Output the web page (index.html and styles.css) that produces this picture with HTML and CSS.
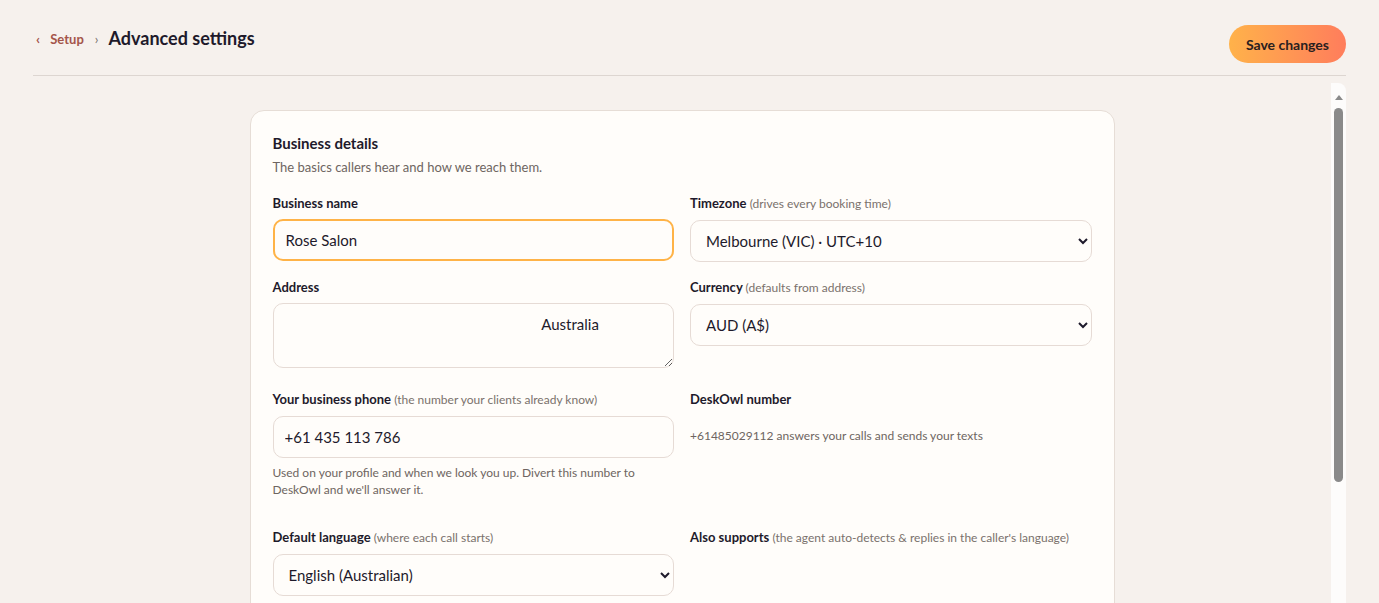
FILE: index.html
```html
<!DOCTYPE html>
<html lang="en">
<head>
    <meta charset="UTF-8">
    <meta name="viewport" content="width=device-width, initial-scale=1.0">
    <title>Advanced settings</title>
    <link rel="stylesheet" href="styles.css">
</head>
<body>
    <header class="top-bar">
        <nav class="crumbs">
            <a href="#" class="crumb-back"><span class="chev">&lsaquo;</span> Setup</a>
            <span class="crumb-sep">&rsaquo;</span>
            <h1>Advanced settings</h1>
        </nav>
        <button class="save-btn">Save changes</button>
    </header>

    <div class="body-area">
        <main class="scroller">
            <section class="card">
                <h2>Business details</h2>
                <p class="card-sub">The basics callers hear and how we reach them.</p>

                <div class="field-grid">
                    <div class="field">
                        <label for="bizName">Business name</label>
                        <input type="text" id="bizName" class="control focused" value="Rose Salon">
                    </div>
                    <div class="field">
                        <label for="tz">Timezone <span class="hint">(drives every booking time)</span></label>
                        <select id="tz" class="control">
                            <option>Melbourne (VIC) · UTC+10</option>
                        </select>
                    </div>

                    <div class="field">
                        <label for="address">Address</label>
                        <textarea id="address" class="control area" rows="2">                                                                   Australia</textarea>
                    </div>
                    <div class="field">
                        <label for="currency">Currency <span class="hint">(defaults from address)</span></label>
                        <select id="currency" class="control">
                            <option>AUD (A$)</option>
                        </select>
                    </div>

                    <div class="field">
                        <label for="phone">Your business phone <span class="hint">(the number your clients already know)</span></label>
                        <input type="text" id="phone" class="control" value="+61 435 113 786">
                        <p class="help">Used on your profile and when we look you up. Divert this number to DeskOwl and we'll answer it.</p>
                    </div>
                    <div class="field">
                        <label>DeskOwl number</label>
                        <div class="static-value">+61485029112 answers your calls and sends your texts</div>
                    </div>

                    <div class="field">
                        <label for="lang">Default language <span class="hint">(where each call starts)</span></label>
                        <select id="lang" class="control">
                            <option>English (Australian)</option>
                        </select>
                    </div>
                    <div class="field">
                        <label>Also supports <span class="hint">(the agent auto-detects &amp; replies in the caller's language)</span></label>
                    </div>
                </div>
            </section>
        </main>

        <!-- scrollbar rail (headless hides native scrollbars) -->
        <div class="rail">
            <span class="rail-arrow"></span>
            <span class="rail-thumb"></span>
        </div>
    </div>
</body>
</html>
```

FILE: styles.css
```css
/* Page shell */
html, body {
    height: 100%;
}

body {
    margin: 0;
    padding: 0 33px;
    box-sizing: border-box;
    display: flex;
    flex-direction: column;
    font-family: Lato, "Open Sans", Arial, sans-serif;
    background-color: #f6f1ed;
    color: #1e1a2b;
    overflow: hidden;
}

/* Header */
.top-bar {
    display: flex;
    justify-content: space-between;
    align-items: flex-start;
    padding: 25px 0 12px;
    border-bottom: 1px solid #ddd6d1;
    flex-shrink: 0;
}

.crumbs {
    display: flex;
    align-items: center;
    height: 26px;
    padding-left: 3px;
}

.crumb-back {
    color: #a4554a;
    text-decoration: none;
    font-size: 13px;
    font-weight: 700;
}

.crumb-back .chev {
    margin-right: 7px;
    font-size: 14px;
}

.crumb-sep {
    color: #7a716c;
    font-size: 13px;
    margin: 1px 10px 0 11px;
}

.crumbs h1 {
    margin: 0;
    font-size: 18px;
    font-weight: 700;
    color: #1e1a2b;
}

.save-btn {
    height: 38px;
    padding: 0 17px;
    border: none;
    border-radius: 19px;
    background: linear-gradient(90deg, #ffb24a, #ff7d5c);
    color: #2a2020;
    font-family: inherit;
    font-size: 14px;
    font-weight: 700;
    cursor: pointer;
}

/* Scrolling body */
.body-area {
    flex: 1;
    min-height: 0;
    display: flex;
    margin-top: 7px;
}

.scroller {
    flex: 1;
    padding: 27px 0 40px;
    overflow: hidden;
}

.rail {
    width: 15px;
    flex-shrink: 0;
    display: flex;
    flex-direction: column;
    align-items: center;
    background-color: #fdfcfb;
    border-radius: 0 8px 0 0;
}

.rail-arrow {
    margin-top: 12px;
    width: 0;
    height: 0;
    border-left: 4.5px solid transparent;
    border-right: 4.5px solid transparent;
    border-bottom: 5px solid #8a8a8a;
}

.rail-thumb {
    margin-top: 8px;
    width: 9px;
    height: 374px;
    background-color: #8a8a8a;
    border-radius: 5px;
}

/* Card */
.card {
    width: 819px;
    margin: 0 auto;
    padding: 22px 22px 120px;
    background-color: #fffdfa;
    border: 1px solid #e6ddd6;
    border-radius: 14px;
}

.card h2 {
    margin: 0;
    font-size: 15px;
    font-weight: 700;
    line-height: 20px;
}

.card-sub {
    margin: 6px 0 19px;
    font-size: 13px;
    color: #6e6561;
}

.field-grid {
    display: grid;
    grid-template-columns: 1fr 1fr;
    column-gap: 16px;
    row-gap: 16px;
}

.field label {
    display: block;
    margin-bottom: 7px;
    font-size: 13px;
    font-weight: 700;
    line-height: 18px;
    color: #1e1a2b;
}

.hint {
    font-size: 12px;
    font-weight: 400;
    color: #7a716c;
}

/* Inputs */
.control {
    display: block;
    width: 100%;
    height: 42px;
    box-sizing: border-box;
    padding: 0 11px;
    border: 1px solid #e6dbd5;
    border-radius: 10px;
    background-color: #fffdfa;
    color: #1e1a2b;
    font-family: inherit;
    font-size: 15px;
}

select.control {
    padding: 0 8px 0 11px;
}

.control.focused {
    border: 2px solid #ffb347;
    outline: none;
}

.control.area {
    height: 65px;
    margin-bottom: 6px;
    padding: 10px 11px;
    resize: vertical;
    line-height: 20px;
    white-space: pre;
}

.help {
    margin: 6px 0 14px;
    font-size: 12px;
    line-height: 17px;
    color: #6e6561;
}

.static-value {
    height: 40px;
    display: flex;
    align-items: center;
    font-size: 12px;
    color: #6e6561;
}
```
